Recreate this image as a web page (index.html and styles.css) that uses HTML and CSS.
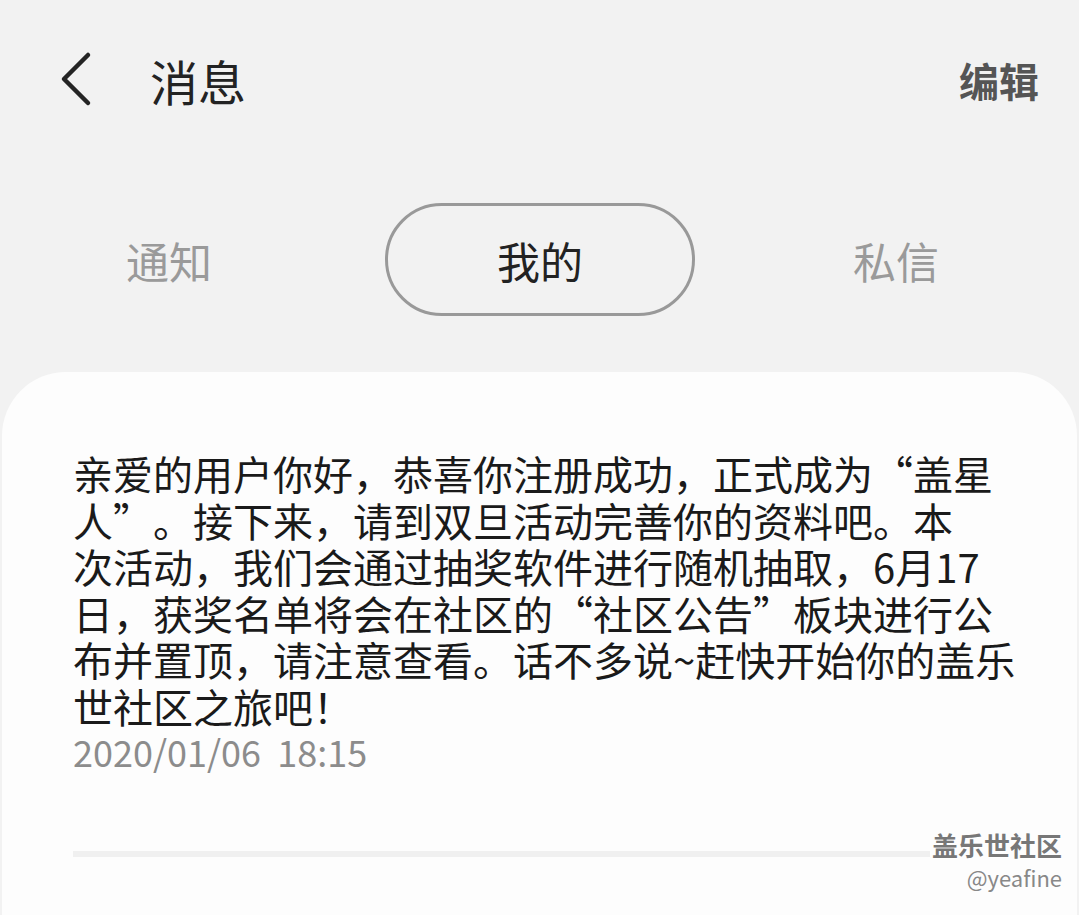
FILE: index.html
```html
<html>
    <head>
        <meta charset="utf-8">
        <title>消息</title>
        <link rel="stylesheet" href="styles.css">
    </head>
    <body>
        <div class="header">
            <div class="back">
                <svg width="36" height="56" viewBox="0 0 36 56">
                    <path d="M30 4 L6 28 L30 52" fill="none" stroke="#242424" stroke-width="4.5" stroke-linecap="round" stroke-linejoin="round"/>
                </svg>
            </div>
            <div class="title">消息</div>
            <div class="edit">编辑</div>
        </div>

        <div class="tabs">
            <div class="tab tab-left">通知</div>
            <div class="tab tab-active">我的</div>
            <div class="tab tab-right">私信</div>
        </div>

        <div class="card">
            <div class="message">
                亲爱的用户你好，恭喜你注册成功，正式成为“盖星<br>
                人”。接下来，请到双旦活动完善你的资料吧。本<br>
                次活动，我们会通过抽奖软件进行随机抽取，6月17<br>
                日，获奖名单将会在社区的“社区公告”板块进行公<br>
                布并置顶，请注意查看。话不多说~赶快开始你的盖乐<br>
                世社区之旅吧！
            </div>
            <div class="time">2020/01/06&nbsp;&nbsp;18:15</div>
            <div class="divider"></div>

            <div class="watermark">
                <div class="wm-name">盖乐世社区</div>
                <div class="wm-user">@yeafine</div>
            </div>
        </div>
    </body>
</html>
```

FILE: styles.css
```css
body {
    margin: 0;
    background-color: #f2f2f2;
    font-family: "Noto Sans CJK SC", "Noto Sans", sans-serif;
    color: #222;
    overflow: hidden;
    text-spacing-trim: space-all;
}

.header {
    height: 160px;
    display: flex;
    align-items: center;
    padding: 0 40px 0 58px;
}

.back {
    width: 36px;
    height: 56px;
    margin-top: -2px;
}

.title {
    margin-left: 56px;
    font-size: 48px;
    color: #232323;
    flex: 1;
}

.edit {
    font-size: 40px;
    font-weight: bold;
    color: #555;
}

.tabs {
    display: flex;
    align-items: center;
    margin-top: 43px;
    height: 113px;
}

.tab {
    font-size: 43px;
    color: #9a9a9a;
}

.tab-left {
    padding-left: 126px;
    width: 385px;
    box-sizing: border-box;
}

.tab-active {
    width: 310px;
    height: 113px;
    box-sizing: border-box;
    border: 3px solid #999;
    border-radius: 57px;
    display: flex;
    align-items: center;
    justify-content: center;
    color: #222;
}

.tab-right {
    padding-left: 158px;
}

.card {
    position: relative;
    margin: 56px 2px 0 2px;
    height: 543px;
    background-color: #fdfdfd;
    border-radius: 64px 64px 0 0;
    padding: 78px 0 0 71px;
    box-sizing: border-box;
}

.message {
    font-size: 40px;
    line-height: 46.5px;
    color: #1a1a1a;
    white-space: nowrap;
}

.time {
    margin-top: 2px;
    font-size: 36px;
    line-height: 40px;
    color: #8c8c8c;
}

.divider {
    margin-top: 80px;
    width: 935px;
    height: 6px;
    background-color: #f0f0f0;
}

.watermark {
    position: absolute;
    right: 15px;
    top: 456px;
    text-align: right;
    background-color: #fdfdfd;
    padding-left: 2px;
}

.wm-name {
    font-size: 26px;
    line-height: 34px;
    font-weight: bold;
    color: #777;
    text-shadow: 1px 1px 0 #fff;
}

.wm-user {
    font-size: 22px;
    line-height: 30px;
    color: #888;
}
```
